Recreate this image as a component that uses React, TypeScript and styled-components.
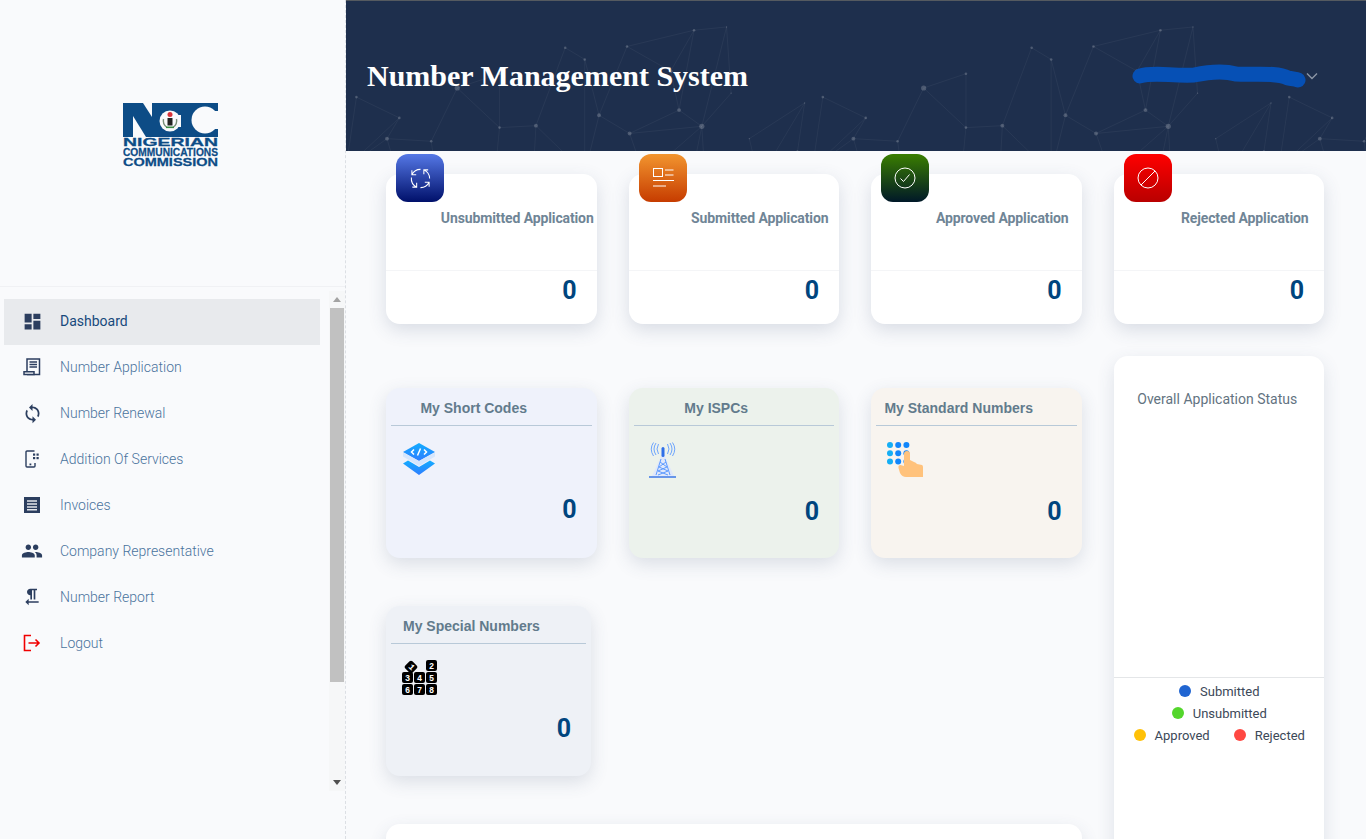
import type {ReactNode} from 'react';
import styled, {createGlobalStyle} from 'styled-components';
import {
  MdDashboard,
  MdFormatTextdirectionRToL,
  MdPeople,
  MdSync,
} from 'react-icons/md';

const GlobalStyle = createGlobalStyle`
  html, body {
    margin: 0;
    height: 100%;
    overflow: hidden;
    background: #f9fafc;
    font-family: Roboto, "Liberation Sans", sans-serif;
  }
  * {
    box-sizing: border-box;
  }
`;

// points of the background mesh, one tile wide (repeats every 717 units)
const MESH_POINTS: [number, number, number][] = [
  [535, 45, 2], [585, 40, 1], [432, 70, 2], [337, 72, 2], [367, 90, 2],
  [499, 108, 3], [236, 112, 2], [171, 134, 4], [16, 148, 2], [82, 180, 2],
  [389, 176, 3], [512, 168, 3], [592, 142, 1], [292, 192, 3], [436, 204, 3],
  [547, 193, 4], [236, 195, 2], [0, 257, 4], [459, 270, 3], [367, 265, 2],
  [285, 320, 2], [222, 340, 2], [176, 352, 2], [148, 340, 3], [98, 332, 3],
  [44, 365, 2], [386, 378, 3], [456, 386, 3], [510, 376, 2], [558, 376, 1],
  [202, 380, 3], [138, 406, 2], [307, 393, 2], [365, 404, 2], [102, 440, 3],
  [42, 447, 5], [262, 437, 3], [487, 447, 5], [620, 212, 1], [635, 275, 2],
  [705, 157, 1], [694, 232, 2], [682, 347, 2], [63, 212, 3], [131, 216, 2],
];

const MESH_EDGES: [number, number][] = [
  [0, 1], [0, 2], [2, 5], [0, 5], [1, 12], [3, 4], [2, 10], [4, 10], [5, 11],
  [0, 11], [12, 15], [1, 15], [6, 7], [7, 16], [3, 13], [13, 16], [10, 14],
  [11, 14], [11, 15], [14, 15], [8, 9], [8, 17], [9, 17], [43, 24], [13, 19],
  [4, 19], [10, 19], [14, 18], [15, 18], [18, 19], [19, 20], [20, 21], [21, 22],
  [22, 23], [23, 24], [24, 25], [44, 23], [16, 21], [13, 20], [20, 32], [21, 30],
  [30, 31], [24, 31], [25, 35], [31, 34], [34, 35], [30, 32], [32, 33], [32, 36],
  [26, 33], [26, 19], [26, 27], [27, 28], [28, 29], [18, 27], [18, 26], [28, 15],
  [29, 15], [33, 36], [27, 37], [28, 37], [29, 37], [36, 34], [38, 39], [38, 40],
  [40, 39], [41, 42], [40, 41], [41, 39], [17, 25], [6, 16], [33, 37], [43, 44],
  [9, 43], [44, 7], [43, 17], [17, 24],
];

const MESH_OFFSETS = [-717, 0, 717, 1434];

type Stat = {
  title: string;
  from: string;
  to: string;
  icon: ReactNode;
};

const STATS: Stat[] = [
  {
    title: 'Unsubmitted Application',
    from: '#5578e6',
    to: '#00106a',
    icon: (
      <svg width="23" height="23" viewBox="0 0 24 24" fill="none" stroke="#fff" strokeWidth="1.100">
        <path d="M12 2.500A10 10 0 0 0 3 8M3 3.500V8h4.500" />
        <path d="M21.500 12A10 10 0 0 0 15.500 3M20 3h-4.500v4.500" />
        <path d="M12 21.500A10 10 0 0 0 21 16M16.500 16H21v4.500" />
        <path d="M2.500 11A10 10 0 0 0 8 21M8 16.500V21H3.500" />
      </svg>
    ),
  },
  {
    title: 'Submitted Application',
    from: '#f2952f',
    to: '#c63c00',
    icon: (
      <svg width="24" height="24" viewBox="0 0 24 24" fill="none" stroke="#fff" strokeWidth="1">
        <rect x="2.500" y="2.500" width="9" height="8" />
        <path d="M14 4h8.500M14 9h8.500M2 14.500h21M2 20h13" />
      </svg>
    ),
  },
  {
    title: 'Approved Application',
    from: '#3a7e00',
    to: '#001828',
    icon: (
      <svg width="24" height="24" viewBox="0 0 24 24" fill="none" stroke="#fff" strokeWidth="1">
        <circle cx="12" cy="12" r="10" />
        <path d="m7.500 12.500 3 3 6-7" />
      </svg>
    ),
  },
  {
    title: 'Rejected Application',
    from: '#ff0000',
    to: '#b90000',
    icon: (
      <svg width="24" height="24" viewBox="0 0 24 24" fill="none" stroke="#fff" strokeWidth="1">
        <circle cx="12" cy="12" r="10" />
        <path d="M5 19 19 5" />
      </svg>
    ),
  },
];

function BillIcon() {
  return (
    <svg width="18" height="18" viewBox="0 0 18 18" fill="none" stroke="#2c3e5f" strokeWidth="1.500">
      <path d="M4 13V1h12.500v15.500H4" />
      <path d="M1 16.500v-2.800h10v2.800H1Z" fill="#f9fafc" />
      <path d="M6.500 4h7.500M6.500 6.500h7.500M6.500 9h7.500" strokeWidth="1.300" />
    </svg>
  );
}

function DeviceIcon() {
  return (
    <svg width="18" height="18" viewBox="0 0 18 18" fill="none">
      <path d="M11.500 1H4a1 1 0 0 0-1 1v14a1 1 0 0 0 1 1h7a1 1 0 0 0 1-1v-3" stroke="#2c3e5f" strokeWidth="1.400" />
      <g fill="#2c3e5f">
        <rect x="10" y="3.500" width="2.200" height="2.200" />
        <rect x="13.500" y="3.500" width="2.200" height="2.200" />
        <rect x="10" y="7" width="2.200" height="2.200" />
        <rect x="13.500" y="7" width="2.200" height="2.200" />
        <rect x="6.500" y="13.500" width="1.800" height="1.800" />
      </g>
    </svg>
  );
}

function InvoiceIcon() {
  return (
    <svg width="18" height="18" viewBox="0 0 18 18">
      <rect x="1" y="1" width="16" height="16" fill="#2c3e5f" />
      <path d="M4 5h10M4 8h10M4 11h10M4 13.800h10" stroke="#e3e6ec" strokeWidth="1.600" />
    </svg>
  );
}

function LogoutIcon() {
  return (
    <svg width="18" height="18" viewBox="0 0 18 18" fill="none" stroke="#f00000" strokeWidth="1.600">
      <path d="M8 1.500H1.500v15H8" />
      <path d="M5.500 9h10.500M12.500 5.500 16 9l-3.500 3.500" />
    </svg>
  );
}

const NAV_ITEMS: {label: string; icon: ReactNode}[] = [
  {label: 'Dashboard', icon: <MdDashboard size={21} />},
  {label: 'Number Application', icon: <BillIcon />},
  {label: 'Number Renewal', icon: <MdSync size={21} />},
  {label: 'Addition Of Services', icon: <DeviceIcon />},
  {label: 'Invoices', icon: <InvoiceIcon />},
  {label: 'Company Representative', icon: <MdPeople size={22} />},
  {label: 'Number Report', icon: <MdFormatTextdirectionRToL size={20} />},
  {label: 'Logout', icon: <LogoutIcon />},
];

function NccLogo() {
  return (
    <svg width="96" height="64" viewBox="0 0 96 64">
      <rect x="0" y="0" width="95" height="34" fill="#0d4c86" />
      <path d="M10 34V13L23 34Z" fill="#f9fafc" />
      <path d="M20 0H29V14Z" fill="#f9fafc" />
      <circle cx="47" cy="18" r="10.500" fill="#f9fafc" />
      <rect x="50" y="12" width="8" height="12" fill="#f9fafc" />
      <circle cx="47" cy="11.500" r="2.500" fill="#d8333b" />
      <rect x="44.500" y="15" width="5" height="7.500" fill="#222" />
      <path d="M40.500 16q-1 5 3 8M53.500 16q1 5-3 8" stroke="#7a8f7a" strokeWidth="1.400" fill="none" />
      <rect x="43" y="23.500" width="8" height="1.600" fill="#3d8b46" />
      <circle cx="82" cy="17" r="13.500" fill="#f9fafc" />
      <rect x="82" y="8" width="13" height="18" fill="#f9fafc" />
      <g
        fill="#0d4c86"
        stroke="#0d4c86"
        strokeWidth="0.200"
        fontFamily="'Liberation Sans', sans-serif"
        fontWeight="700"
        fontSize="9"
        transform="scale(1 1.280)"
      >
        <text x="0" y="33.400" textLength="95" lengthAdjust="spacingAndGlyphs">NIGERIAN</text>
        <text x="0" y="41.200" textLength="95" lengthAdjust="spacingAndGlyphs">COMMUNICATIONS</text>
        <text x="0" y="49" textLength="95" lengthAdjust="spacingAndGlyphs">COMMISSION</text>
      </g>
    </svg>
  );
}

function StackIcon() {
  return (
    <svg width="36" height="34" viewBox="0 0 36 34">
      <defs>
        <linearGradient id="stack" x1="0" y1="0" x2="0" y2="1">
          <stop offset="0" stopColor="#12adff" />
          <stop offset="1" stopColor="#2f7dff" />
        </linearGradient>
      </defs>
      <path d="M18 1 34 10 18 19 2 10Z" fill="url(#stack)" />
      <path d="M7 18.500 18 25 29 18.500 34 21.500 18 33 2 21.500Z" fill="url(#stack)" />
      <path d="M18 19 34 10.500v4L18 24 2 14.500v-4Z" fill="#d5e6fd" />
      <path d="M13 7.500 10.500 10 13 12.500M23 7.500 25.500 10 23 12.500M19.500 6.500 16.500 13.500" fill="none" stroke="#fff" strokeWidth="1.500" />
    </svg>
  );
}

function TowerIcon() {
  return (
    <svg width="28" height="36" viewBox="0 0 28 36" fill="none" stroke="#5d9bff" strokeWidth="0.900">
      <path d="M14 10 3 34h22Z" fill="#e0e8fa" stroke="none" />
      <rect x="12.500" y="5" width="3" height="10" rx="1.500" fill="#2f6fe8" stroke="none" />
      <path d="M9.500 2Q6.500 7 9.500 12M18.500 2q3 5 0 10M7 1Q3 7 7 13M21 1q4 6 0 12M4.500 .5Q0 7 4.500 14M23.500 .5Q28 7 23.500 14" />
      <path d="M12 17 7 33M16 17l5 16M11 20l7 5-9 4 10 4M17 20l-7 5 9 4-10 4" strokeWidth="1" />
      <path d="M0 35h27" stroke="#2f6fe8" strokeWidth="1.400" />
    </svg>
  );
}

function KeypadIcon() {
  const dots = [0, 1, 2].flatMap((row) => [0, 1, 2].map((col) => [col, row]));
  return (
    <svg width="36" height="36" viewBox="0 0 36 36">
      {dots.map(([col, row]) => (
        <circle
          key={`${col}-${row}`}
          cx={3 + col * 8.200}
          cy={3 + row * 8.200}
          r="3"
          fill={col === 0 ? '#14aef5' : '#1186fb'}
        />
      ))}
      <path
        d="M17 12a3 3 0 0 1 6 0v6l4 2q2 .5 3 2l5 1q1 .5 1 2v10H19q-4 0-6-4l-1.500-5q-.5-3 2-3l3.500 1Z"
        fill="#ffc27c"
      />
    </svg>
  );
}

function NumberTilesIcon() {
  const tiles: [string, number, number][] = [
    ['2', 24, 0],
    ['3', 0, 12],
    ['4', 12, 12],
    ['5', 24, 12],
    ['6', 0, 24],
    ['7', 12, 24],
    ['8', 24, 24],
  ];
  return (
    <svg width="36" height="35" viewBox="0 0 36 35">
      <g fontFamily="'Liberation Mono', monospace" fontWeight="700" fontSize="8.500" textAnchor="middle">
        <rect x="4" y="2" width="10" height="10" rx="2" fill="#000" transform="rotate(45 9 7)" />
        <text x="10" y="10" fill="#fff" transform="rotate(45 10 7)">1</text>
        {tiles.map(([digit, x, y]) => (
          <g key={digit}>
            <rect x={x} y={y} width="11" height="11" rx="2" fill="#000" />
            <text x={x + 5.500} y={y + 8.500} fill="#fff">{digit}</text>
          </g>
        ))}
      </g>
    </svg>
  );
}

const LEGEND_ROWS: {label: string; color: string}[][] = [
  [{label: 'Submitted', color: '#2065d1'}],
  [{label: 'Unsubmitted', color: '#54d62c'}],
  [
    {label: 'Approved', color: '#ffc107'},
    {label: 'Rejected', color: '#ff4842'},
  ],
];

export default function App() {
  return (
    <Page>
      <GlobalStyle />
      <Sidebar>
        <LogoPanel>
          <NccLogo />
        </LogoPanel>
        <NavArea>
          <NavList>
            {NAV_ITEMS.map((item, index) => (
              <NavItem key={item.label} $active={index === 0}>
                <NavIcon>{item.icon}</NavIcon>
                {item.label}
              </NavItem>
            ))}
          </NavList>
          <ScrollTrack>
            <ScrollArrow $up />
            <ScrollThumb />
            <ScrollArrow />
          </ScrollTrack>
        </NavArea>
      </Sidebar>

      <Main>
        <Header>
          <Mesh viewBox="0 0 1568 231" preserveAspectRatio="none">
            {MESH_OFFSETS.map((offset) => (
              <g key={offset} transform={`translate(${offset} 0)`}>
                {MESH_EDGES.map(([a, b]) => (
                  <line
                    key={`${a}-${b}`}
                    x1={MESH_POINTS[a][0]}
                    y1={MESH_POINTS[a][1]}
                    x2={MESH_POINTS[b][0]}
                    y2={MESH_POINTS[b][1]}
                    stroke="#ffffff"
                    strokeOpacity="0.08"
                  />
                ))}
                {MESH_POINTS.map(([x, y, r]) => (
                  <circle key={`${x}-${y}`} cx={x} cy={y} r={r} fill="#ffffff" fillOpacity="0.2" />
                ))}
              </g>
            ))}
          </Mesh>
          <Title>Number Management System</Title>
          <UserMenu>
            <svg width="174" height="26" viewBox="0 0 174 26" fill="none">
              <path
                d="M8 13C20 9 40 13 62 12 76 9 90 7 104 11c20 1 40-2 52 4 4 1 8 1 10 2"
                stroke="#0650b5"
                strokeWidth="15"
                strokeLinecap="round"
                strokeLinejoin="round"
              />
            </svg>
            <svg width="12" height="8" viewBox="0 0 12 8" fill="none">
              <path d="M1 1.500 6 6.500 11 1.500" stroke="#8c96a6" strokeWidth="1.400" />
            </svg>
          </UserMenu>
        </Header>

        <Content>
          <StatGrid>
            {STATS.map((stat) => (
              <StatCard key={stat.title}>
                <Badge $from={stat.from} $to={stat.to}>
                  {stat.icon}
                </Badge>
                <StatTitle>{stat.title}</StatTitle>
                <StatValue>0</StatValue>
              </StatCard>
            ))}
          </StatGrid>

          <LowerGrid>
            <div>
              <AssetGrid>
                <AssetCard $bg="#eff2fb">
                  <AssetTitle>My Short Codes</AssetTitle>
                  <AssetIcon $indent={15}>
                    <StackIcon />
                  </AssetIcon>
                  <AssetValue>0</AssetValue>
                </AssetCard>
                <AssetCard $bg="#ecf2ec">
                  <AssetTitle>My ISPCs</AssetTitle>
                  <AssetIcon $indent={20}>
                    <TowerIcon />
                  </AssetIcon>
                  <AssetValue $drop={2}>0</AssetValue>
                </AssetCard>
                <AssetCard $bg="#f8f4ef">
                  <AssetTitle>My Standard Numbers</AssetTitle>
                  <AssetIcon $indent={16}>
                    <KeypadIcon />
                  </AssetIcon>
                  <AssetValue $drop={2}>0</AssetValue>
                </AssetCard>
                <AssetCard $bg="#eef1f6" $width="205px">
                  <AssetTitle>My Special Numbers</AssetTitle>
                  <AssetIcon $indent={16}>
                    <NumberTilesIcon />
                  </AssetIcon>
                  <AssetValue $drop={1}>0</AssetValue>
                </AssetCard>
              </AssetGrid>
              <ReportCard />
            </div>

            <ChartCard>
              <ChartTitle>Overall Application Status</ChartTitle>
              <ChartBody />
              <Legend>
                {LEGEND_ROWS.map((row) => (
                  <LegendRow key={row[0].label}>
                    {row.map((entry) => (
                      <LegendEntry key={entry.label}>
                        <LegendDot $color={entry.color} />
                        {entry.label}
                      </LegendEntry>
                    ))}
                  </LegendRow>
                ))}
              </Legend>
            </ChartCard>
          </LowerGrid>
        </Content>
      </Main>
    </Page>
  );
}

const Page = styled.div`
  display: flex;
  height: 100vh;
  overflow: hidden;
`;

const Sidebar = styled.aside`
  flex: 0 0 346px;
  border-right: 1px dashed #dcdfe4;
  background: #f9fafc;
`;

const LogoPanel = styled.div`
  display: flex;
  height: 287px;
  padding: 103px 0 0 123px;
  border-bottom: 1px solid #f0f1f4;
`;

const NavArea = styled.div`
  display: flex;
  height: 500px;
  margin-top: 4px;
`;

const NavList = styled.nav`
  flex: 1;
  padding: 8px 9px 0 4px;
`;

const NavItem = styled.a<{$active?: boolean}>`
  display: flex;
  align-items: center;
  height: 46px;
  padding-bottom: 2px;
  color: ${(p) => (p.$active ? '#17497c' : '#4a739c')};
  background: ${(p) => (p.$active ? '#e8eaed' : 'transparent')};
  font-size: 14px;
  font-weight: ${(p) => (p.$active ? 400 : 300)};
`;

const NavIcon = styled.span`
  display: flex;
  justify-content: center;
  width: 56px;
  color: #2c3e5f;
`;

const ScrollTrack = styled.div`
  display: flex;
  flex: 0 0 16px;
  flex-direction: column;
  background: #f6f7f8;
`;

const ScrollThumb = styled.div`
  height: 374px;
  margin: 0 1px;
  background: #c1c1c1;
`;

const ScrollArrow = styled.div<{$up?: boolean}>`
  order: ${(p) => (p.$up ? 0 : 2)};
  width: 0;
  height: 0;
  margin: ${(p) => (p.$up ? '6px 4px 6px' : 'auto 4px 6px')};
  border-right: 4px solid transparent;
  border-left: 4px solid transparent;
  ${(p) => (p.$up ? 'border-bottom: 5px solid #a3a3a3;' : 'border-top: 5px solid #505050;')}
`;

const Main = styled.main`
  flex: 1;
  min-width: 0;
`;

const Header = styled.header`
  position: relative;
  display: flex;
  align-items: center;
  justify-content: space-between;
  height: 151px;
  padding: 0 48px 0 21px;
  overflow: hidden;
  border-top: 1px solid #555a60;
  background: #1e2f4d;
`;

const Mesh = styled.svg`
  position: absolute;
  inset: 0;
  width: 100%;
  height: 100%;
`;

const Title = styled.h1`
  position: relative;
  margin: 0;
  color: #fff;
  font-family: "Liberation Serif", serif;
  font-size: 30px;
  font-weight: 700;
`;

const UserMenu = styled.div`
  position: relative;
  display: flex;
  align-items: center;
`;

const Content = styled.div`
  padding: 23px 42px 0 40px;
`;

const StatGrid = styled.div`
  display: grid;
  grid-template-columns: repeat(4, 1fr);
  gap: 32px;
`;

const StatCard = styled.section`
  position: relative;
  height: 150px;
  padding-top: 36px;
  border-radius: 14px;
  background: #fff;
  box-shadow: 0 6px 18px rgba(60, 80, 110, 0.17);
`;

const Badge = styled.div<{$from: string; $to: string}>`
  position: absolute;
  top: -20px;
  left: 10px;
  display: flex;
  align-items: center;
  justify-content: center;
  width: 48px;
  height: 48px;
  border-radius: 12px;
  background: linear-gradient(${(p) => p.$from}, ${(p) => p.$to});
`;

const StatTitle = styled.h3`
  height: 60px;
  margin: 0;
  padding: 0 0 0 52px;
  color: #6f8596;
  font-size: 14px;
  font-weight: 700;
  line-height: 16px;
  letter-spacing: -0.12px;
  white-space: nowrap;
  text-align: center;
`;

const StatValue = styled.div`
  height: 54px;
  padding-right: 20px;
  border-top: 1px solid #f4f5f7;
  color: #00457e;
  font-size: 25px;
  font-weight: 700;
  line-height: 40px;
  text-align: right;
`;

const LowerGrid = styled.div`
  display: grid;
  grid-template-columns: 1fr 210.5px;
  gap: 32px;
  margin-top: 32px;
`;

const AssetGrid = styled.div`
  display: grid;
  grid-template-columns: repeat(3, 1fr);
  gap: 48px 32px;
  padding-top: 32px;
`;

const AssetCard = styled.section<{$bg: string; $width?: string}>`
  width: ${(p) => p.$width ?? 'auto'};
  height: 170px;
  padding: 0 5px;
  border-radius: 14px;
  background: ${(p) => p.$bg};
  box-shadow: 0 6px 18px rgba(60, 80, 110, 0.16);
`;

const AssetTitle = styled.h3`
  height: 38px;
  margin: 0;
  padding: 12px 17.5% 0 0;
  border-bottom: 1px solid #b8c9d8;
  color: #627b8c;
  font-family: "Liberation Sans", sans-serif;
  font-size: 14px;
  font-weight: 700;
  line-height: 16px;
  white-space: nowrap;
  text-align: center;
`;

const AssetIcon = styled.div<{$indent: number}>`
  height: 36px;
  margin-top: 16px;
  padding-left: ${(p) => p.$indent - 5}px;
`;

const AssetValue = styled.div<{$drop?: number}>`
  margin-top: ${(p) => 17 + (p.$drop ?? 0)}px;
  padding-right: 15px;
  color: #00457e;
  font-size: 25px;
  font-weight: 700;
  line-height: 30px;
  text-align: right;
`;

const ReportCard = styled.section`
  height: 200px;
  margin-top: 48px;
  border-radius: 14px;
  background: #fff;
  box-shadow: 0 6px 18px rgba(60, 80, 110, 0.14);
`;

const ChartCard = styled.section`
  height: 600px;
  border-radius: 14px;
  background: #fff;
  box-shadow: 0 6px 18px rgba(60, 80, 110, 0.14);
`;

const ChartTitle = styled.h3`
  margin: 0;
  padding: 35px 3px 0 0;
  color: #637381;
  font-size: 14px;
  font-weight: 400;
  line-height: 16px;
  text-align: center;
`;

const ChartBody = styled.div`
  height: 271px;
  border-bottom: 1px solid #e4e6e8;
`;

const Legend = styled.div`
  padding: 2px 0 0 1px;
`;

const LegendRow = styled.div`
  display: flex;
  justify-content: center;
  gap: 24px;
  height: 22px;
`;

const LegendEntry = styled.span`
  display: flex;
  align-items: center;
  gap: 9px;
  color: #3c4858;
  font-size: 13px;
`;

const LegendDot = styled.i<{$color: string}>`
  width: 12px;
  height: 12px;
  border-radius: 50%;
  background: ${(p) => p.$color};
`;
